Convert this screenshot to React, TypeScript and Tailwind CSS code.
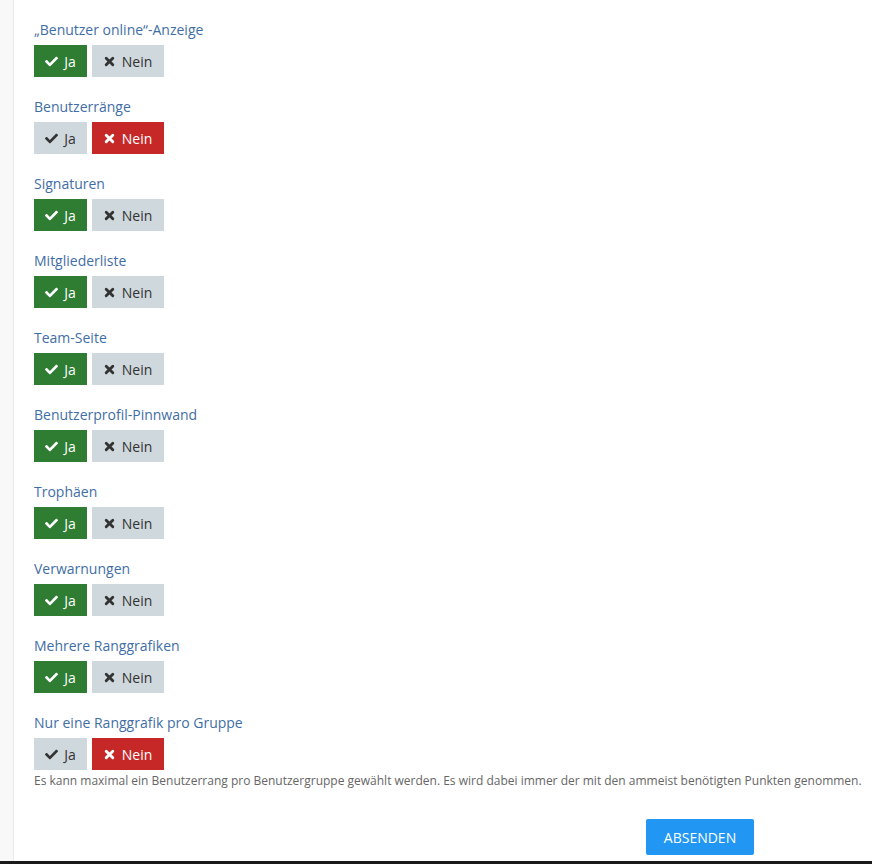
import React from 'react';
import { FaCheck } from 'react-icons/fa';

type Item = { label: string; on: boolean };

const items: Item[] = [
  { label: '„Benutzer online“-Anzeige', on: true },
  { label: 'Benutzerränge', on: false },
  { label: 'Signaturen', on: true },
  { label: 'Mitgliederliste', on: true },
  { label: 'Team-Seite', on: true },
  { label: 'Benutzerprofil-Pinnwand', on: true },
  { label: 'Trophäen', on: true },
  { label: 'Verwarnungen', on: true },
  { label: 'Mehrere Ranggrafiken', on: true },
  { label: 'Nur eine Ranggrafik pro Gruppe', on: false },
];

// heavy "times" glyph like font-awesome 4
const Cross = () => (
  <svg width="11" height="11" viewBox="0 0 10 10" className="shrink-0">
    <path d="M2 2 L8 8 M8 2 L2 8" stroke="currentColor" strokeWidth="2.6" strokeLinecap="round" />
  </svg>
);

const Toggle: React.FC<{ on: boolean }> = ({ on }) => (
  <div className="flex gap-[5px]">
    <button
      className={`flex h-8 w-[53px] items-center justify-center gap-[6px] text-[14px] ${
        on ? 'bg-[#2e7d32] text-white' : 'bg-[#cfd8dc] text-[#333]'
      }`}
    >
      <FaCheck className="text-[13px]" />
      <span>Ja</span>
    </button>
    <button
      className={`flex h-8 w-[72px] items-center justify-center gap-[7px] text-[14px] ${
        on ? 'bg-[#cfd8dc] text-[#333]' : 'bg-[#c62828] text-white'
      }`}
    >
      <Cross />
      <span>Nein</span>
    </button>
  </div>
);

export default function App() {
  return (
    <div className="flex h-[864px] flex-col bg-white font-['Open_Sans',sans-serif]">
      <div className="flex flex-1">
        <div className="w-[14px] border-r border-[#ececec] bg-[#f8f8f8]" />
        <div className="flex flex-1 flex-col pl-5 pt-5">
          {items.map((it, i) => (
            <div key={i} className={i === items.length - 1 ? '' : 'mb-5'}>
              <div className="mb-[5px] h-5 text-[14px] leading-5 text-[#3f6ea6]">{it.label}</div>
              <Toggle on={it.on} />
            </div>
          ))}
          <p className="mt-[3px] whitespace-nowrap text-[12px] leading-[16px] text-[#666]">
            Es kann maximal ein Benutzerrang pro Benutzergruppe gewählt werden. Es wird dabei immer der mit den ammeist benötigten Punkten genommen.
          </p>
          <div className="mt-[30px] flex justify-end pr-[118px]">
            <button className="h-9 w-[108px] rounded-[2px] bg-[#2196f3] text-[14px] text-white">ABSENDEN</button>
          </div>
        </div>
      </div>
      <div className="h-[3px] bg-[#1a1a1a]" />
    </div>
  );
}
